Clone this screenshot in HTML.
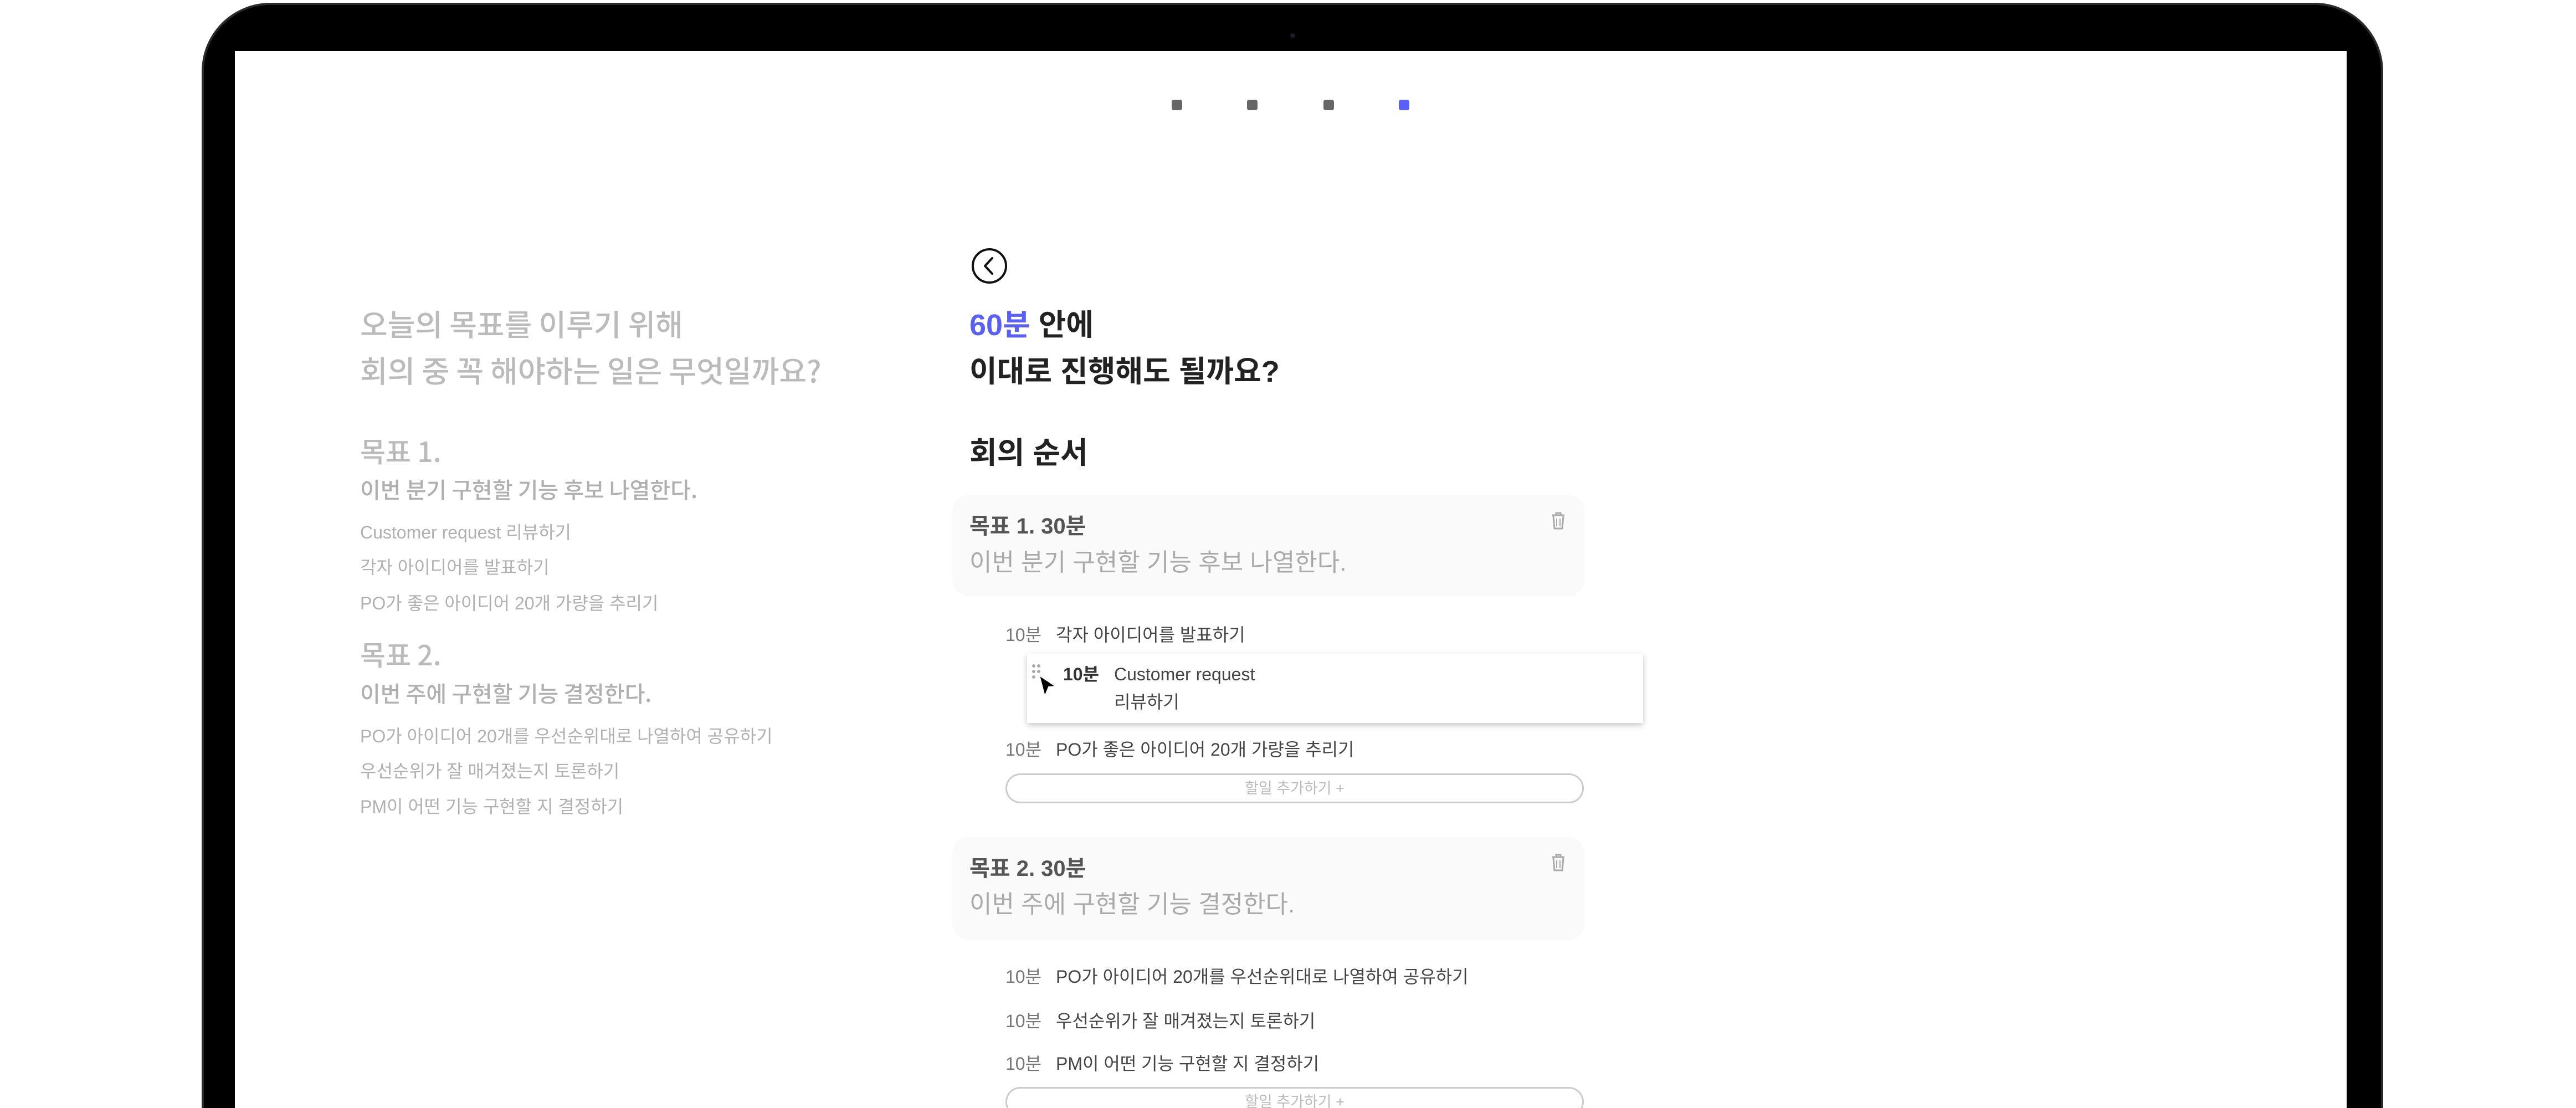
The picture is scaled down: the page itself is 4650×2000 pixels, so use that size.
<!DOCTYPE html>
<html><head><meta charset="utf-8"><style>
*{margin:0;padding:0;box-sizing:border-box}
html{width:4650px;height:2000px;overflow:hidden}
body{width:4650px;height:2000px;background:#fff;position:relative;overflow:hidden;font-family:"Liberation Sans","Noto Sans CJK KR",sans-serif}
.a{position:absolute;white-space:nowrap;line-height:1}
.bezel{position:absolute;left:368px;top:9px;width:3930px;height:1991px;background:#000;border-radius:120px 120px 0 0;box-shadow:0 0 0 4px #2a2a2a}
.screen{position:absolute;left:424px;top:92px;width:3812px;height:1908px;background:#fff}
.dot{position:absolute;top:180px;width:19px;height:19px;border-radius:4px;background:#666}
.card{position:absolute;left:1719px;width:1141px;background:#fafafa;border-radius:30px}
.btn{position:absolute;left:1815px;width:1044px;height:54px;border:3px solid #ccc;border-radius:30px;color:#bbb;font-size:27px;text-align:center;line-height:48px}
.g1{color:#bbb;font-weight:500;font-size:54px;font-family:"Noto Sans CJK KR","Liberation Sans",sans-serif}
.m{color:#555}
.it{font-size:32px;color:#444}
.it b{color:#777;font-weight:400;margin-right:26px}
.lt{font-size:32px;color:#b0b0b0}
</style></head><body>
<div class="bezel"></div>
<div class="screen"></div>
<div class="a" style="left:2329px;top:60px;width:9px;height:9px;border-radius:50%;background:#1a1a2a"></div>
<div class="dot" style="left:2115px"></div>
<div class="dot" style="left:2251px"></div>
<div class="dot" style="left:2389px"></div>
<div class="dot" style="left:2525px;background:#5a5ff5"></div>

<!-- left column -->
<div class="a g1" style="left:650px;top:556px">오늘의 목표를 이루기 위해</div>
<div class="a g1" style="left:650px;top:640px">회의 중 꼭 해야하는 일은 무엇일까요?</div>
<div class="a g1" style="left:650px;top:788px;font-size:50px">목표 1.</div>
<div class="a g1" style="left:650px;top:862px;font-size:40px;color:#b0b0b0">이번 분기 구현할 기능 후보 나열한다.</div>
<div class="a lt" style="left:650px;top:945px">Customer request 리뷰하기</div>
<div class="a lt" style="left:650px;top:1008px">각자 아이디어를 발표하기</div>
<div class="a lt" style="left:650px;top:1073px">PO가 좋은 아이디어 20개 가량을 추리기</div>
<div class="a g1" style="left:650px;top:1155px;font-size:50px">목표 2.</div>
<div class="a g1" style="left:650px;top:1230px;font-size:40px;color:#b0b0b0">이번 주에 구현할 기능 결정한다.</div>
<div class="a lt" style="left:650px;top:1313px">PO가 아이디어 20개를 우선순위대로 나열하여 공유하기</div>
<div class="a lt" style="left:650px;top:1376px">우선순위가 잘 매겨졌는지 토론하기</div>
<div class="a lt" style="left:650px;top:1440px">PM이 어떤 기능 구현할 지 결정하기</div>

<!-- right column -->
<svg class="a" style="left:1753px;top:447px" width="66" height="66" viewBox="0 0 66 66"><circle cx="33" cy="33" r="30" fill="none" stroke="#111" stroke-width="4"/><path d="M38 19 L25 33 L38 47" fill="none" stroke="#111" stroke-width="4" stroke-linecap="round" stroke-linejoin="round"/></svg>
<div class="a" style="left:1750px;top:560px;font-size:54px;font-weight:700;color:#222"><span style="color:#5a5ff5">60분</span> 안에</div>
<div class="a" style="left:1750px;top:644px;font-size:54px;font-weight:700;color:#222">이대로 진행해도 될까요?</div>
<div class="a" style="left:1750px;top:791px;font-size:54px;font-weight:700;color:#222">회의 순서</div>

<div class="card" style="top:893px;height:183px"></div>
<div class="a m" style="left:1750px;top:930px;font-size:40px;font-weight:700">목표 1. 30분</div>
<div class="a" style="left:1750px;top:994px;font-size:44px;color:#aaa">이번 분기 구현할 기능 후보 나열한다.</div>
<svg class="a" style="left:2800px;top:924px" width="26" height="32" viewBox="0 0 26 32"><path d="M2 6h22M9 6V2h8v4M4 8l2 22h14l2-22" fill="none" stroke="#aaa" stroke-width="3"/><path d="M10 12v14M16 12v14" stroke="#aaa" stroke-width="2"/></svg>

<div class="a it" style="left:1815px;top:1130px"><b>10분</b>각자 아이디어를 발표하기</div>
<div class="a" style="left:1854px;top:1180px;width:1112px;height:125px;background:#fff;box-shadow:0 4px 10px rgba(0,0,0,.22)"></div>
<svg class="a" style="left:1862px;top:1198px" width="18" height="30" viewBox="0 0 18 30"><g fill="#aaa"><circle cx="4" cy="4" r="3"/><circle cx="13" cy="4" r="3"/><circle cx="4" cy="14" r="3"/><circle cx="13" cy="14" r="3"/><circle cx="4" cy="24" r="3"/></g></svg>
<svg class="a" style="left:1874px;top:1217px" width="36" height="42" viewBox="0 0 36 42"><path d="M2 2 L32 22 L19 23 L12 40 Z" fill="#000" stroke="#fff" stroke-width="2"/></svg>
<div class="a" style="left:1919px;top:1201px;font-size:32px;font-weight:700;color:#333">10분</div>
<div class="a" style="left:2011px;top:1201px;font-size:32px;color:#444">Customer request</div>
<div class="a" style="left:2011px;top:1251px;font-size:32px;color:#444">리뷰하기</div>
<div class="a it" style="left:1815px;top:1337px"><b>10분</b>PO가 좋은 아이디어 20개 가량을 추리기</div>
<div class="btn" style="top:1396px">할일 추가하기 +</div>

<div class="card" style="top:1510px;height:187px"></div>
<div class="a m" style="left:1750px;top:1548px;font-size:40px;font-weight:700">목표 2. 30분</div>
<div class="a" style="left:1750px;top:1611px;font-size:44px;color:#aaa">이번 주에 구현할 기능 결정한다.</div>
<svg class="a" style="left:2800px;top:1541px" width="26" height="32" viewBox="0 0 26 32"><path d="M2 6h22M9 6V2h8v4M4 8l2 22h14l2-22" fill="none" stroke="#aaa" stroke-width="3"/><path d="M10 12v14M16 12v14" stroke="#aaa" stroke-width="2"/></svg>
<div class="a it" style="left:1815px;top:1747px"><b>10분</b>PO가 아이디어 20개를 우선순위대로 나열하여 공유하기</div>
<div class="a it" style="left:1815px;top:1827px"><b>10분</b>우선순위가 잘 매겨졌는지 토론하기</div>
<div class="a it" style="left:1815px;top:1904px"><b>10분</b>PM이 어떤 기능 구현할 지 결정하기</div>
<div class="btn" style="top:1962px">할일 추가하기 +</div>
</body></html>
